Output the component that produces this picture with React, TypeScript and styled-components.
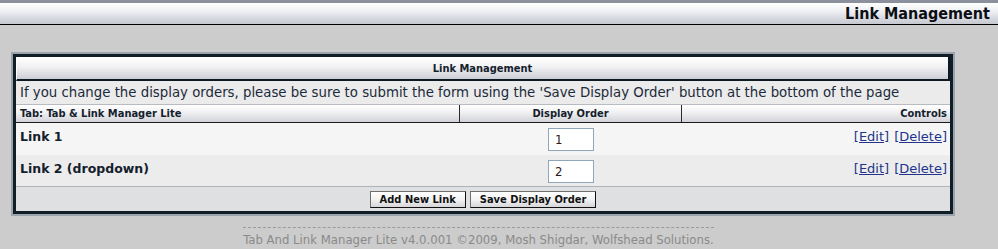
import styled, { createGlobalStyle } from 'styled-components'

const GlobalStyle = createGlobalStyle`
	body {
		margin: 0;
		background: #cccccc;
		font-family: Tahoma, 'DejaVu Sans Condensed', 'DejaVu Sans', sans-serif;
		color: #14212d;
	}
`

const wideFont = `Verdana, 'DejaVu Sans', sans-serif`

const TopBar = styled.div`
	height: 21px;
	border-top: 3px solid #8c8f9c;
	border-bottom: 1px solid #000000;
	background: linear-gradient(#ffffff 0%, #eeeff3 40%, #c6c8d0 100%);
	display: flex;
	align-items: center;
	justify-content: flex-end;
	padding-right: 8px;
`

const PageTitle = styled.h1`
	margin: 0;
	font-size: 16px;
	font-weight: bold;
	color: #0b0f14;
`

const Content = styled.div`
	padding: 27px 0 0 11px;
	width: 944px;
`

const Frame = styled.div`
	border: 2px solid #9ba4ac;
`

const Panel = styled.div`
	border: 3px solid #101e28;
	background: #ececec;
`

const PanelHeader = styled.div`
	height: 22px;
	border-bottom: 2px solid #0e1a23;
	border-right: 2px solid #0e1a23;
	border-left: 1px solid #ffffff;
	background: linear-gradient(#ffffff 0%, #f1f1f3 45%, #cdced5 100%);
	display: flex;
	align-items: center;
	justify-content: center;
	font-size: 11px;
	font-weight: bold;
`

const Notice = styled.div`
	height: 23px;
	border-bottom: 1px solid #b8bbbf;
	padding-left: 4px;
	display: flex;
	align-items: center;
	font-family: ${wideFont};
	font-size: 13.3px;
	color: #1b2a3a;
	background: #ebebeb;
	white-space: nowrap;
`

const Row = styled.div<{ $shade?: string }>`
	display: grid;
	grid-template-columns: 444px 222px 1fr;
	background: ${(p) => p.$shade || '#f5f5f5'};
`

const HeadRow = styled(Row)`
	height: 17px;
	border-bottom: 1px solid #1a1a1a;
	background: linear-gradient(#ffffff 0%, #f0f0f2 45%, #d2d3d9 100%);
`

const HeadCell = styled.div<{ $align: 'left' | 'center' | 'right' }>`
	font-size: 11px;
	font-weight: bold;
	line-height: 17px;
	padding: 0 4px;
	text-align: ${(p) => p.$align};
	border-right: 1px solid #2a2a2a;

	&:last-child {
		border-right: none;
		padding-right: 3px;
	}
`

const BodyRow = styled(Row)<{ $height: number }>`
	height: ${(p) => p.$height}px;
`

const NameCell = styled.div`
	padding: 6px 4px 0;
	font-family: ${wideFont};
	font-size: 12.5px;
	font-weight: bold;
	line-height: 16px;
	color: #13202c;
`

const OrderCell = styled.div`
	display: flex;
	justify-content: center;
	align-items: flex-start;
	padding-top: 5px;
`

const OrderInput = styled.input`
	box-sizing: border-box;
	width: 46px;
	height: 23px;
	border: 1px solid #8fa8b9;
	background: #ffffff;
	padding: 0 6px;
	font-family: inherit;
	font-size: 13px;
	color: #2a1a1a;
	outline: none;
`

const ControlsCell = styled.div`
	padding: 6px 3px 0 0;
	text-align: right;
	font-family: ${wideFont};
	font-size: 13px;
	line-height: 16px;
`

const ControlLink = styled.a`
	color: #22348a;
	text-decoration: underline;
	cursor: pointer;

	& + & {
		margin-left: 5px;
	}
`

const FooterBar = styled.div`
	height: 25px;
	border-top: 1px solid #abb3bb;
	background: #dfe0e2;
	display: flex;
	justify-content: center;
	align-items: flex-start;
	gap: 4px;
	padding-top: 4px;
	box-sizing: border-box;
`

const FormButton = styled.button`
	height: 17px;
	padding: 0 9px;
	border: 1px solid #6f6f6f;
	border-right-color: #111111;
	border-bottom-color: #111111;
	border-radius: 0;
	background: linear-gradient(#ffffff 0%, #f3f3f3 50%, #d6d6da 100%);
	font-family: inherit;
	font-size: 11px;
	font-weight: bold;
	color: #111111;
	line-height: 15px;
	cursor: pointer;
`

const Credits = styled.div`
	display: flex;
	justify-content: center;
	margin-top: 11px;
	padding-right: 9px;
`

const CreditText = styled.span`
	border-top: 1px dashed #9a9a9a;
	padding-top: 4px;
	font-size: 13px;
	color: #8a8a8a;
`

const links = [
	{ name: 'Link 1', order: '1', shade: '#f5f5f5', height: 32 },
	{ name: 'Link 2 (dropdown)', order: '2', shade: '#ececec', height: 31 },
]

export default function App() {
	return (
		<>
			<GlobalStyle />
			<TopBar>
				<PageTitle>Link Management</PageTitle>
			</TopBar>
			<Content>
				<Frame>
					<Panel>
						<PanelHeader>Link Management</PanelHeader>
						<Notice>
							If you change the display orders, please be sure to submit the
							form using the 'Save Display Order' button at the bottom of the
							page
						</Notice>
						<HeadRow>
							<HeadCell $align="left">Tab: Tab &amp; Link Manager Lite</HeadCell>
							<HeadCell $align="center">Display Order</HeadCell>
							<HeadCell $align="right">Controls</HeadCell>
						</HeadRow>
						{links.map((link) => (
							<BodyRow key={link.name} $shade={link.shade} $height={link.height}>
								<NameCell>{link.name}</NameCell>
								<OrderCell>
									<OrderInput defaultValue={link.order} />
								</OrderCell>
								<ControlsCell>
									<ControlLink>[Edit]</ControlLink>
									<ControlLink>[Delete]</ControlLink>
								</ControlsCell>
							</BodyRow>
						))}
						<FooterBar>
							<FormButton>Add New Link</FormButton>
							<FormButton>Save Display Order</FormButton>
						</FooterBar>
					</Panel>
				</Frame>
				<Credits>
					<CreditText>
						Tab And Link Manager Lite v4.0.001 ©2009, Mosh Shigdar, Wolfshead
						Solutions.
					</CreditText>
				</Credits>
			</Content>
		</>
	)
}
